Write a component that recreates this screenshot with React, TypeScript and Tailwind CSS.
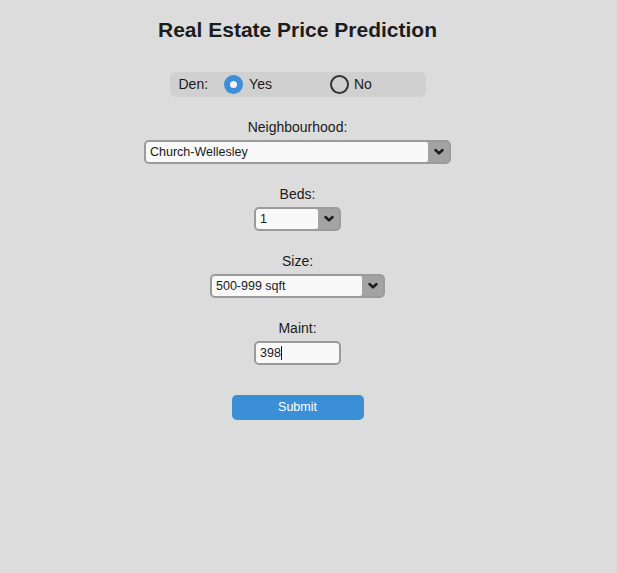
import React from "react";

const Chevron = () => (
  <svg width="12" height="8" viewBox="0 0 12 8" fill="none">
    <path d="M2.5 2 L6 5.4 L9.5 2" stroke="#1c1c1c" strokeWidth="2.5" strokeLinecap="round" strokeLinejoin="round" />
  </svg>
);

function FakeSelect({ width, value }: { width: string; value: string }) {
  return (
    <div className={`${width} h-[24px] flex rounded-[5px] border-2 border-[#9b9b9b] bg-[#a3a3a3] overflow-hidden`}>
      <div className="flex-1 bg-[#f9f9fa] flex items-center pl-[4px] text-[12.5px] text-[#1a1a1a] rounded-r-[2px]">
        {value}
      </div>
      <div className="w-[21px] flex items-center justify-center">
        <Chevron />
      </div>
    </div>
  );
}

export default function App() {
  return (
    <div className="min-h-[573px] w-full bg-[#dcdcdc] text-[#1a1a1a]" style={{ fontFamily: '"Liberation Sans", Arial, sans-serif' }}>
      <div className="w-[595px] flex flex-col items-center">
        <h1 className="mt-[17px] text-[21px] leading-[25px] font-bold text-[#1c1c1c]">Real Estate Price Prediction</h1>

        <div className="mt-[30px] w-[256px] h-[25px] rounded-[6px] bg-[#d0d0d0] flex items-center pl-[9px] text-[14px]">
          <span>Den:</span>
          <div className="ml-[16px] w-[19px] h-[19px] rounded-full bg-[#3d8fd9] flex items-center justify-center">
            <div className="w-[7px] h-[7px] rounded-full bg-[#f4f4f4]" />
          </div>
          <span className="ml-[6px]">Yes</span>
          <div className="ml-[58px] w-[19px] h-[19px] rounded-full border-[2.5px] border-[#333333]" />
          <span className="ml-[5px]">No</span>
        </div>

        <label className="mt-[21px] text-[14px] leading-[18px]">Neighbourhood:</label>
        <div className="mt-[4px]">
          <FakeSelect width="w-[307px]" value="Church-Wellesley" />
        </div>

        <label className="mt-[21px] text-[14px] leading-[18px]">Beds:</label>
        <div className="mt-[4px]">
          <FakeSelect width="w-[87px]" value="1" />
        </div>

        <label className="mt-[21px] text-[14px] leading-[18px]">Size:</label>
        <div className="mt-[4px]">
          <FakeSelect width="w-[175px]" value="500-999 sqft" />
        </div>

        <label className="mt-[21px] text-[14px] leading-[18px]">Maint:</label>
        <div className="mt-[4px] w-[87px] h-[24px] rounded-[5px] border-2 border-[#9b9b9b] bg-[#f9f9fa] flex items-center pl-[4px] text-[12.5px]">
          <span>398</span>
          <span className="w-px h-[14px] bg-[#1a1a1a]" />
        </div>

        <button className="mt-[30px] w-[132px] h-[25px] rounded-[5px] bg-[#3b8fd6] text-white text-[12.5px]">Submit</button>
      </div>
    </div>
  );
}
